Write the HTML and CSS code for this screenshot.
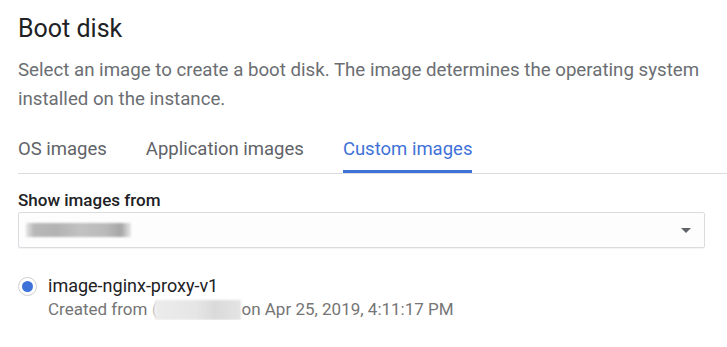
FILE: index.html
```html
<!DOCTYPE html>
<html lang="en">
  <head>
    <meta charset="UTF-8" />
    <meta name="viewport" content="width=device-width, initial-scale=1.0" />
    <title>Boot disk</title>
    <link rel="stylesheet" href="styles.css">
  </head>
  <body>
    <div class="panel">
      <h1 class="title">Boot disk</h1>
      <p class="desc">
        Select an image to create a boot disk. The image determines the operating system
        installed on the instance.
      </p>

      <div class="tabs">
        <div class="tab">OS images</div>
        <div class="tab">Application images</div>
        <div class="tab active">Custom images</div>
      </div>

      <div class="field">
        <label class="field-label">Show images from</label>
        <div class="select">
          <span class="blur blur-project"></span>
          <svg class="arrow" width="10" height="5" viewBox="0 0 10 5">
            <path d="M0 0 L10 0 L5 5 Z" fill="#5f6368" />
          </svg>
        </div>
      </div>

      <div class="image-option">
        <span class="radio"><span class="dot"></span></span>
        <div class="image-info">
          <div class="image-name">image-nginx-proxy-v1</div>
          <div class="image-meta">
            Created from <span class="cut">(</span><span class="blur blur-disk"></span>on Apr 25, 2019, 4:11:17 PM
          </div>
        </div>
      </div>
    </div>
  </body>
</html>
```

FILE: styles.css
```css
* {
  padding: 0;
  margin: 0;
  box-sizing: border-box;
}
body {
  background: #fff;
  font-family: Roboto, "Liberation Sans", sans-serif;
  color: #202124;
}
.panel {
  padding: 14px 0 0 18px;
}
.title {
  font-size: 25px;
  font-weight: 400;
  line-height: 30px;
  color: #202124;
}
.desc {
  margin-top: 12px;
  font-size: 18.7px;
  line-height: 29px;
  color: #6b6e72;
  width: 705px;
}
.tabs {
  display: flex;
  gap: 39px;
  margin-top: 24px;
  border-bottom: 1px solid #dadce0;
}
.tab {
  font-size: 18.5px;
  line-height: 22px;
  padding-bottom: 10px;
  color: #5f6368;
  border-bottom: 3px solid transparent;
}
.tab.active {
  color: #3f72d8;
  border-bottom-color: #3f72d8;
}
.field {
  margin-top: 16px;
  width: 687px;
}
.field-label {
  display: block;
  font-size: 17px;
  font-weight: 500;
  line-height: 20px;
  color: #202124;
}
.select {
  margin-top: 2px;
  height: 36px;
  border: 1px solid #dadce0;
  border-radius: 2px;
  background: #fdfdfd;
  display: flex;
  align-items: center;
  justify-content: space-between;
  padding: 0 13px 0 7px;
  box-shadow: 0 1px 1px rgba(0, 0, 0, 0.05);
}
.blur {
  display: inline-block;
  filter: blur(1.2px);
}
.blur-project {
  width: 105px;
  height: 14px;
  background: linear-gradient(
    90deg,
    #e6e6e6 0,
    #b8b8b8 8px,
    #b3b3b3 30px,
    #c2c2c2 55px,
    #b9b9b9 80px,
    #a6a6a6 95px,
    #e9e9e9 105px
  );
}
.arrow {
  display: block;
}
.image-option {
  display: flex;
  align-items: flex-start;
  gap: 11px;
  margin-top: 27px;
}
.radio {
  width: 19px;
  height: 19px;
  margin-top: 2px;
  border: 1.5px solid #cfcfcf;
  border-radius: 50%;
  display: flex;
  align-items: center;
  justify-content: center;
}
.dot {
  width: 11px;
  height: 11px;
  border-radius: 50%;
  background: #3f72d8;
}
.image-name {
  font-size: 18px;
  line-height: 22px;
  color: #202124;
}
.image-meta {
  font-size: 17px;
  line-height: 22px;
  color: #757575;
  margin-top: 1px;
}
.cut {
  color: #c4c4c4;
}
.blur-disk {
  width: 86px;
  height: 20px;
  vertical-align: -5px;
  margin-left: -2px;
  background: linear-gradient(
    90deg,
    #ececec 0,
    #e6e6e6 40px,
    #dadada 60px,
    #e4e4e4 86px
  );
}
```
